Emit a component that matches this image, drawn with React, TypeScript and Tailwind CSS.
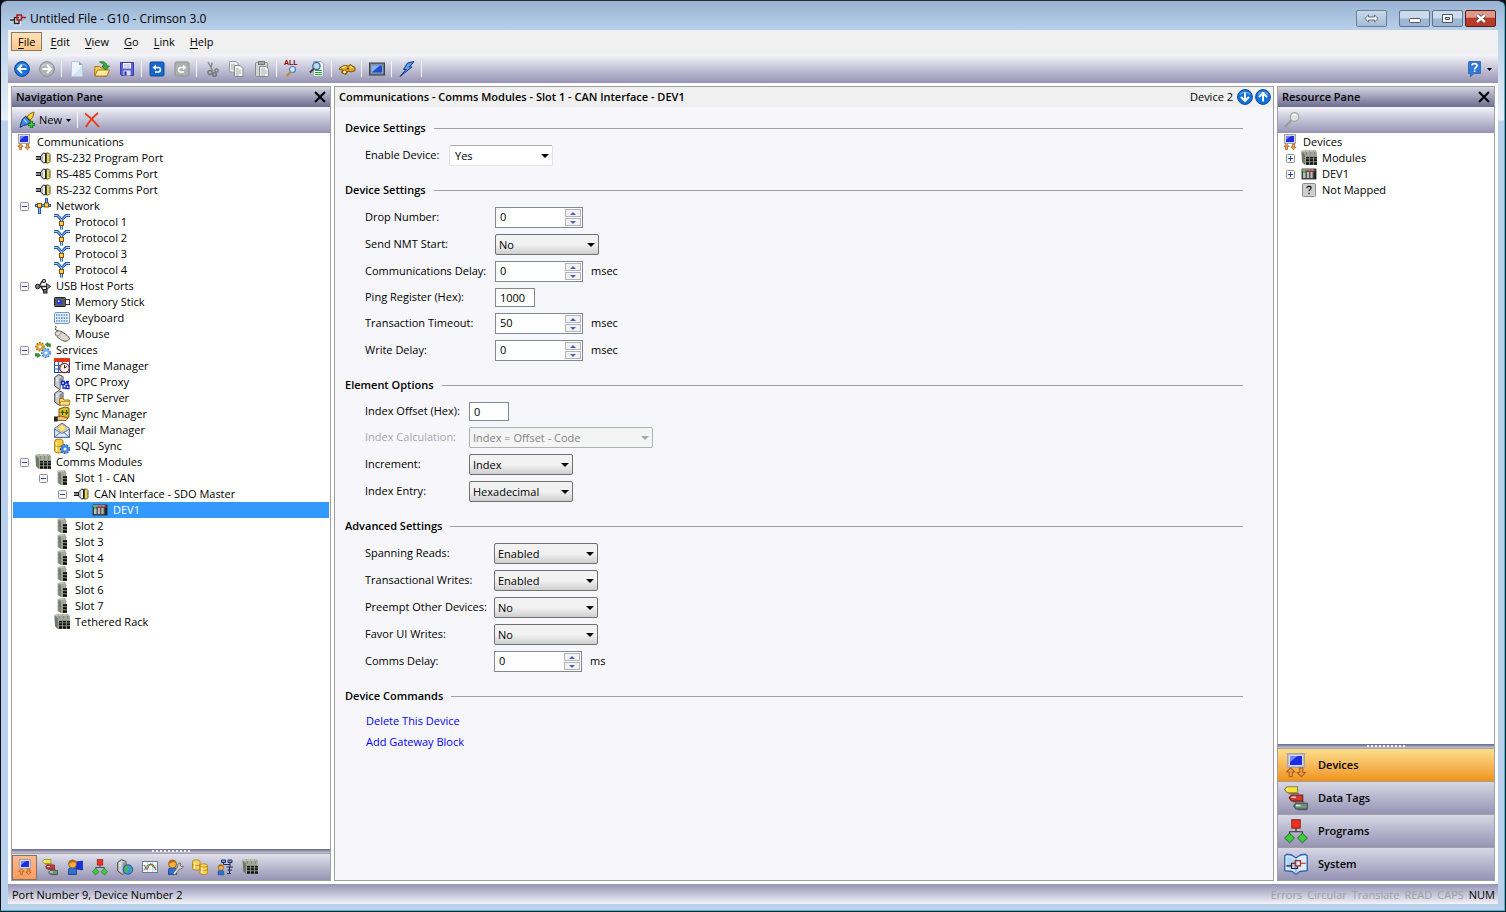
import React, { useState } from 'react';

/* ---------- icons ---------- */

type IconProps = { size?: number };

const Svg: React.FC<{ size?: number; children: React.ReactNode }> = ({ size = 16, children }) => (
  <svg width={size} height={size} viewBox="0 0 16 16" fill="none" className="shrink-0 overflow-visible" aria-hidden="true">
    {children}
  </svg>
);

const CircleArrow: React.FC<{ size?: number; color: string; edge: string; rotate: number }> = ({ size = 16, color, edge, rotate }) => (
  <Svg size={size}>
    <circle cx="8" cy="8" r="7.4" fill={color} stroke={edge} />
    <path d="M3 5.5a6 5 0 0 1 10 0" stroke="#fff" strokeOpacity=".35" strokeWidth="1.5" />
    <path d="M12.5 8H4.5M8 4L4 8l4 4" stroke="#fff" strokeWidth="1.9" transform={`rotate(${rotate} 8 8)`} />
  </Svg>
);

const CommsIcon = ({ size }: IconProps) => (
  <Svg size={size}>
    <rect x="2.5" y=".5" width="11" height="9" fill="#d9d7d2" stroke="#a5a3b0" />
    <rect x="4" y="2" width="8" height="6" fill="#1c2ee0" />
    <path d="M4 2h5L4 6z" fill="#6f86ff" />
    <path d="M4.5 9.8L1.8 12.6h1.7v3h2v-3h1.7zM11.5 15.8l-2.7-2.8h1.7v-3h2v3h1.7z" fill="#f0a050" stroke="#a85a18" strokeWidth=".7" />
  </Svg>
);

const PortIcon = () => (
  <Svg>
    <path d="M1 8h5" stroke="#8a8a8a" strokeWidth="2" />
    <path d="M1 6.5h5M1 9.5h5" stroke="#1a1a1a" />
    <path d="M5.5 6L8.5 3.2h2v9.6h-2L5.5 10z" fill="#b8b8b8" stroke="#222" />
    <path d="M9 4v8" stroke="#fff" strokeWidth="1.4" />
    <path d="M11.5 3h2l1.5 1.5v7L13.5 13h-2z" fill="#f3e02a" stroke="#4a4a4a" />
    <path d="M14.3 5v6" stroke="#8c8c8c" />
  </Svg>
);

const NetworkIcon = () => (
  <Svg>
    <path d="M0 7.5h16M4.5 8v8M11.5 7V0" stroke="#1f57ad" strokeWidth="3" />
    <path d="M1 7.5h14M4.5 8v7.5M11.5 7V.5" stroke="#7db8f5" />
    <rect x="2.5" y="5.5" width="4" height="4" fill="#ffd84a" stroke="#8a4a08" />
    <rect x="9.5" y="5" width="4" height="4" fill="#ffd84a" stroke="#8a4a08" />
  </Svg>
);

const ProtocolIcon = () => (
  <Svg>
    <path d="M0 1.5h3.5L7.5 6v9.5M7.5 6L12 1.5h4" stroke="#1f57ad" strokeWidth="2.8" />
    <path d="M0 1.5h3.5L7.5 6v9.5M7.5 6L12 1.5h4" stroke="#b4d4f7" />
    <rect x="5.5" y="7.5" width="4" height="4" fill="#ffd84a" stroke="#8a4a08" />
  </Svg>
);

const UsbIcon = () => (
  <Svg>
    <path d="M2 8.500h12M4 8.500l3-5h2M6 8.500l3 5h2" stroke="#222" strokeWidth="1.4" />
    <circle cx="2.7" cy="8.5" r="2.3" fill="#777" stroke="#222" />
    <circle cx="9" cy="3" r="1.7" fill="#bbb" stroke="#222" />
    <rect x="8.5" y="11.500" width="3.500" height="3.500" fill="#666" stroke="#222" />
    <path d="M11.500 5.500L15.500 8.500l-4 3z" fill="#999" stroke="#222" />
  </Svg>
);

const MemoryIcon = () => (
  <Svg>
    <rect x=".5" y="3.5" width="11" height="9" rx="1" fill="#5a5a5a" stroke="#1c1c1c" />
    <rect x="11.5" y="5.5" width="4" height="5" fill="#f2f2f2" stroke="#333" />
    <circle cx="5.5" cy="8" r="2.6" fill="#2a3cf0" />
    <circle cx="4.8" cy="7.2" r=".9" fill="#c8d0ff" />
  </Svg>
);

const KeyboardIcon = () => (
  <Svg>
    <rect x=".5" y="2.5" width="15" height="11" rx="1.5" fill="#e4effa" stroke="#8a97a6" />
    <path d="M2 5h12M2 8h12M2 11h12" stroke="#6ea8e4" strokeWidth="1.8" strokeDasharray="1.5 1" />
  </Svg>
);

const MouseIcon = () => (
  <Svg>
    <path d="M1 0c3 1-1 3 1 4s2 0 2 2" stroke="#333" />
    <path d="M1.5 6.5C3 4 6 4.500 9 6.500s6 4 6.500 6c-1 3-5 3.500-8 1.500S0 9 1.500 6.500z" fill="#dcd9d0" stroke="#555" />
    <path d="M3 10c2-.5 4-2 4.500-4" stroke="#888" />
  </Svg>
);

const GearsIcon = () => (
  <Svg>
    <circle cx="5" cy="4.8" r="3.600" stroke="#9a6408" strokeWidth="2.4" strokeDasharray="1.6 1" />
    <circle cx="5" cy="4.8" r="2.600" fill="#fff" stroke="#e0a02c" strokeWidth="2.2" />
    <circle cx="11" cy="11" r="3.700" stroke="#2468b8" strokeWidth="2.4" strokeDasharray="1.6 1" />
    <circle cx="11" cy="11" r="2.700" fill="#fff" stroke="#79b6ee" strokeWidth="2.2" />
    <path d="M10 2.500l3-2v1.300h2.500V5L13 3.800v1z" fill="#2d9a2d" stroke="#176017" strokeWidth=".5" />
    <path d="M5.500 13.500l-3 2v-1.300H.3v-3L3 12v-.7z" fill="#2d9a2d" stroke="#176017" strokeWidth=".5" />
  </Svg>
);

const TimeIcon = () => (
  <Svg>
    <rect x=".5" y=".5" width="15" height="14" fill="#fff" stroke="#1b4aa0" />
    <path d="M0 7.500h16M0 11h16M4.500 4v11M8.500 4v11" stroke="#2a66c8" strokeWidth="1.2" />
    <rect width="16" height="4" fill="#d93a1f" />
    <circle cx="10.5" cy="10" r="4.7" fill="#f6f2ee" stroke="#8a2a1c" strokeWidth="1.3" />
    <path d="M10.500 10V7M10.500 10L13 8.500" stroke="#222" />
  </Svg>
);

const ServerBody = () => (
  <>
    <path d="M.7 3.500L4.500.6 9 2.500v11l-3.500 2L.7 12z" fill="#c9ccd0" stroke="#444" />
    <path d="M5.500 4.500L9 2.500v11l-3.500 2z" fill="#8e9399" />
    <path d="M2 4l2 .8M2 6l2 .8" stroke="#fff" />
  </>
);

const OpcIcon = () => (
  <Svg>
    <ServerBody />
    <path d="M7 7h8v8H7z" fill="#fff" />
    <path d="M7.500 7.500h3v3h-3zM12 11.500h3v3h-3zM10.500 9H14v2.500M9 10.500V14h3M12 7.500h3" stroke="#1224c8" strokeWidth="1.3" />
  </Svg>
);

const FtpIcon = () => (
  <Svg>
    <ServerBody />
    <path d="M5.500 15V8.500H9l1 1.500h5.500v5z" fill="#ffd766" stroke="#a8720c" />
    <path d="M5.500 15L7 11.500h9L15 15z" fill="#ffe694" stroke="#a8720c" strokeWidth=".7" />
  </Svg>
);

const SyncIcon = () => (
  <Svg>
    <path d="M5 12V3l6-2 4 1v9l-4 2z" fill="#e9b324" stroke="#7e5b08" />
    <path d="M8.500 9V6M7 7l1.500-2L10 7M12.500 4v3M11 6l1.500 2L14 6" stroke="#127012" strokeWidth="1.2" />
    <path d="M3 11l4-1 5 1.500 2 .5-2 2.500H3z" fill="#f0c27c" stroke="#6b4210" strokeWidth=".8" />
    <path d="M0 10.500h3.500v5H0z" fill="#222" />
  </Svg>
);

const MailIcon = () => (
  <Svg>
    <path d="M.6 6.500L8 1l7.400 5.500v8.900H.6z" fill="#dfe9f7" stroke="#43619b" />
    <path d="M3 6.500L8 2l5 4.500L8 10z" fill="#ffe37a" stroke="#b9922e" strokeWidth=".6" />
    <path d="M.6 7L8 11.500 15.400 7M.6 15.400L6 10.500M15.400 15.400L10 10.500" stroke="#43619b" strokeWidth=".9" />
  </Svg>
);

const SqlIcon = () => (
  <Svg>
    <path d="M.7 3C.7.5 9 .5 9 3v10c0 2.500-8.300 2.500-8.300 0z" fill="#f7cd3e" stroke="#a8760a" />
    <path d="M2.500 4v9.500" stroke="#fff2b0" strokeWidth="1.5" />
    <path d="M1 7.500c2 1.500 6 1.500 8 0" stroke="#a8760a" strokeWidth=".7" />
    <circle cx="11" cy="11" r="4" stroke="#174f9e" strokeWidth="2" strokeDasharray="1.8 1" />
    <circle cx="11" cy="11" r="2.800" fill="#fff" stroke="#3f8ae4" strokeWidth="2.6" />
  </Svg>
);

const RackIcon = ({ size }: IconProps) => (
  <Svg size={size}>
    <path d="M0 1.500L2 0h12l2 2v13H4l-3-3z" fill="#a4a89a" />
    <path d="M1 2l3 2.500V15l-3-3z" fill="#71756a" />
    <path d="M1 1h13" stroke="#d8dad0" strokeDasharray="3 1" />
    <path d="M5.500 2v3M9.500 2v3M13.500 2v3" stroke="#84887c" />
    <path d="M5 6h10v9H5z" fill="#8d9186" />
    <path d="M5 7h3v1.500H5zM9 7h3v1.500H9zM13 7h3v1.500h-3zM5 9.300h3v2H5zM9 9.300h3v2H9zM13 9.300h3v2h-3zM5 12.300h3v2.400H5zM9 12.300h3v2.400H9zM13 12.300h3v2.400h-3z" fill="#0e110e" />
  </Svg>
);

const SlotIcon = () => (
  <Svg>
    <path d="M3.500 1l3-1h4.500l1.500 3v12H7l-3.500-2z" fill="#a4a89a" />
    <path d="M4.500 2L7 3.500V15l-2.500-2z" fill="#787c71" />
    <path d="M4 1h6" stroke="#d8dad0" />
    <path d="M8.500 6H13v9H8.500z" fill="#8d9186" />
    <path d="M9 6.300h4v2H9zM9 9.300h4v2H9zM9 12.300h4v2.400H9z" fill="#0e110e" />
  </Svg>
);

const DevIcon = () => (
  <Svg>
    <rect x="1" y="3" width="14" height="10" fill="#555" stroke="#222" strokeWidth=".8" />
    <path d="M1 3h12v2H1z" fill="#8c8c8c" />
    <path d="M2 6.500h2.500V12H2zM6 6h2v6H6zM9.500 6h2v6h-2z" fill="#bdbdbd" />
    <path d="M6 4.500h1.500M9 4.500h1.500M12 4.500h1.500" stroke="#f0281e" strokeWidth="1.6" />
    <path d="M2 6h2" stroke="#26d426" strokeWidth="2.2" />
    <path d="M12.800 5.500H15V13h-2.200z" fill="#222" />
  </Svg>
);

const UnknownIcon = () => (
  <Svg>
    <rect x="1.500" y="1.500" width="13" height="13" rx="1" fill="#cfcfcf" stroke="#8a8a8a" />
    <path d="M6 6.200C6 3.500 10 3.800 10 6c0 1.400-2 1.500-2 3.300M8 10.800v1.400" stroke="#222" strokeWidth="1.3" />
  </Svg>
);

const TagsIcon = ({ size }: IconProps) => (
  <Svg size={size}>
    <path d="M3 5h7M6 10.500h7.500M9 15.700h6.500" stroke="#333" strokeOpacity=".6" />
    <path d="M.5 2.300L2 .5h7v4H2z" fill="#f2e43c" stroke="#8c842c" strokeWidth=".7" />
    <path d="M3.500 7.800L5 6h7.500v4H5z" fill="#d6362c" stroke="#6e1c16" strokeWidth=".7" />
    <path d="M6.500 13.300L8 11.500h7.500v3.800H8z" fill="#74907e" stroke="#3c5042" strokeWidth=".7" />
    <path d="M1.800 2.300h1M5 7.500h3M8 13h3" stroke="#fff" strokeOpacity=".8" />
  </Svg>
);

const UserBody = () => (
  <>
    <path d="M1.500 15.500v-4c0-2 1-3 4-3s4 1 4 3v4z" fill="#2f6fd0" stroke="#123a80" strokeWidth=".8" />
    <circle cx="5.500" cy="5" r="4" fill="#f5b04a" stroke="#8a5010" strokeWidth=".8" />
    <path d="M1.500 5C1.500-.5 9-.5 9.500 4L6 3z" fill="#b9680f" />
  </>
);

const UserScreenIcon = () => (
  <Svg>
    <path d="M9 3l6.500-1v9L9 10z" fill="#1430e0" stroke="#0a1a80" strokeWidth=".6" />
    <UserBody />
  </Svg>
);

const ProgramsIcon = ({ size }: IconProps) => (
  <Svg size={size}>
    <path d="M8 6v2.500M3.700 11V8.500h8.600V11" stroke="#2c3c2c" strokeWidth=".8" />
    <rect x="5.200" y=".5" width="5.600" height="5.600" fill="#f2321e" stroke="#7c140a" strokeWidth=".6" />
    <path d="M3.700 9.400L7 12.700 3.700 15.900.4 12.700zM12.300 9.400l3.300 3.300-3.300 3.200L9 12.700z" fill="#3fcb3f" stroke="#146614" strokeWidth=".6" />
  </Svg>
);

const GlobeServerIcon = () => (
  <Svg>
    <ServerBody />
    <circle cx="11" cy="10.500" r="4.800" fill="#3f8fe0" stroke="#1b4a86" strokeWidth=".8" />
    <path d="M8 8c2-2 3 0 4-.5s1 2-1 2.500 1 2-.5 3.500S7 10 8 8zM13.500 9.500l1.500 1-1.500 3z" fill="#4cba48" />
  </Svg>
);

const ChartIcon = () => (
  <Svg>
    <rect x=".5" y="2.500" width="15" height="11" fill="#f7fbff" stroke="#6b7a8c" />
    <path d="M1 6.500h14M1 10h14M5.500 3v10M10.500 3v10" stroke="#c4daf0" />
    <path d="M2 6l3 4.500L8 5l3 .5 3 5.500" stroke="#d23a2a" />
    <path d="M2 11.500L6 6l3-1 2 3 3 1" stroke="#2a9a3a" />
  </Svg>
);

const UserWrenchIcon = () => (
  <Svg>
    <UserBody />
    <path d="M7 15l5-6.500" stroke="#666" strokeWidth="3.2" />
    <path d="M10.500 8a3 3 0 0 1 3-4l-.5 2 1.500 1.500 1.500-.5a3 3 0 0 1-4 3z" fill="#ccc" stroke="#555" strokeWidth=".8" />
    <path d="M7 15l5-6.500" stroke="#ddd" strokeWidth="1.6" />
  </Svg>
);

const DatabaseIcon = () => (
  <Svg>
    <path d="M.6 2.500C.6.300 8 .300 8 2.500v7c0 2-7.400 2-7.400 0z" fill="#fbd65a" stroke="#a8760a" strokeWidth=".8" />
    <path d="M.6 5.500c1.500 1.500 6 1.500 7.400 0" stroke="#a8760a" strokeWidth=".7" />
    <path d="M8 6.500c0-2.200 7.400-2.200 7.400 0V14c0 2-7.400 2-7.400 0z" fill="#fbd65a" stroke="#a8760a" strokeWidth=".8" />
    <path d="M8 7c1.500 1.500 6 1.500 7.400 0M8 10.500c1.500 1.500 6 1.500 7.400 0" stroke="#a8760a" strokeWidth=".7" />
    <path d="M2.500 4v5.500M10 8.500V14" stroke="#fff6c8" strokeWidth="1.2" />
  </Svg>
);

const UserNetIcon = () => (
  <Svg>
    <path d="M4.500 1h4v2.500h-4zM11 1h4v2.500h-4z" fill="#7fa0e0" stroke="#1c2c5c" />
    <path d="M6.500 3.500v2H13M13 3.500V8M9.500 8H16M10.500 11H15M10 14.500h4M12.500 8v6" stroke="#1c2c5c" />
    <g transform="translate(0 5) scale(.7)">
      <UserBody />
    </g>
  </Svg>
);

const SystemIcon = ({ size }: IconProps) => (
  <Svg size={size}>
    <path d="M.5 2.500L2 1.500 5 2l3 2 3-2 3-.5 1.500 1v10l-5 .5L8 15l-2.500-2-5-.5z" fill="#dcebfb" stroke="#2d62b4" strokeWidth=".9" />
    <path d="M2 3l3 .5L8 6v7L5.500 11 2 10.500z" fill="#8fbcee" fillOpacity=".5" />
    <path d="M8 4v10.500" stroke="#7fa9dc" strokeWidth=".8" />
    <path d="M1.500 9.200H5V7.500h3M5 9.200V11h4V9.500" stroke="#222" strokeWidth=".8" />
    <path d="M14.500 7.500H11V5.800H7.500v3.500H11V7.500" stroke="#b02020" strokeWidth=".8" />
  </Svg>
);

const DocIcon = () => (
  <Svg>
    <path d="M2.500.5H10L13.500 4v11.500h-11z" fill="#eef5fd" stroke="#b4c6de" />
    <path d="M10 .5V4h3.500z" fill="#7ba6de" />
    <path d="M3 15L13 5v10z" fill="#c2d8f3" fillOpacity=".6" />
  </Svg>
);

const OpenIcon = () => (
  <Svg>
    <path d="M.8 15V5.500h4.500L7 7h6v8z" fill="#f6cf5a" stroke="#a87a14" />
    <path d="M.8 15l2.700-6h12L13 15z" fill="#ffeb9c" stroke="#a87a14" />
    <path d="M5.500 1c4-1 7 .5 7.500 4h2.500l-4 4L8 5h2c-.5-2-2-3-4.500-4z" fill="#32b132" stroke="#136113" strokeWidth=".7" />
  </Svg>
);

const SaveIcon = () => (
  <Svg>
    <path d="M1.500 1.500h13v13h-12l-1-1z" fill="#5a60dc" stroke="#3a3f9c" />
    <rect x="4" y="2" width="8" height="5.500" fill="#f3f5ff" />
    <path d="M5 4h6M5 6h6" stroke="#9ba0d0" strokeWidth=".8" />
    <rect x="4.500" y="9.500" width="7" height="5" fill="#dfe3f7" />
    <rect x="5.500" y="10.500" width="2" height="4" fill="#23288c" />
  </Svg>
);

const UndoIcon: React.FC<{ color: string; edge: string; flip?: boolean }> = ({ color, edge, flip }) => (
  <Svg>
    <rect x="1" y="1" width="14" height="14" rx="1.500" fill={color} stroke={edge} />
    <g transform={flip ? 'translate(16 0) scale(-1 1)' : undefined}>
      <path d="M5.500 6.500h4c2.500 0 2.500 4.500 0 4.500H6" stroke="#fff" strokeWidth="1.6" />
      <path d="M3.500 6.500l3.500-3v6z" fill="#fff" />
    </g>
  </Svg>
);

const CutIcon = () => (
  <Svg>
    <path d="M4 1l5 9M8 1.500L7 8" stroke="#8c8c8c" strokeWidth="1.5" />
    <circle cx="6" cy="11.500" r="2" stroke="#777" strokeWidth="1.5" />
    <circle cx="10.500" cy="13.500" r="1.800" stroke="#777" strokeWidth="1.500" />
    <circle cx="12.500" cy="9.500" r="1.600" stroke="#777" strokeWidth="1.300" />
  </Svg>
);

const CopyIcon = () => (
  <Svg>
    <path d="M.5.5H7l2 2V11H.5z" fill="#eee" stroke="#999" />
    <path d="M2 4h4M2 6h3M2 8h3" stroke="#aaa" />
    <path d="M5.500 4.500H11l3 3v8H5.500z" fill="#f4f4f4" stroke="#888" />
    <path d="M7 8h3M7 10h5M7 12h5M7 14h3" stroke="#aaa" />
  </Svg>
);

const PasteIcon = () => (
  <Svg>
    <rect x="1.500" y="1.500" width="12" height="14" rx="1" fill="#d4d4d4" stroke="#888" />
    <rect x="4.500" y=".5" width="6" height="3" fill="#aaa" stroke="#777" />
    <path d="M5.500 5.500H12L14.500 8v7.500h-9z" fill="#f4f4f4" stroke="#888" />
    <path d="M7 8h4M7 10h6M7 12h6M7 14h4" stroke="#aaa" />
  </Svg>
);

const FindAllIcon = () => (
  <Svg>
    <text x="0" y="4" fontSize="7" fontWeight="700" fill="#8c0000" fontFamily="Liberation Sans, sans-serif">ALL</text>
    <circle cx="8.500" cy="8.500" r="3" fill="#cfe8fb" stroke="#4686c0" strokeWidth="1.2" />
    <path d="M6.500 11l-4 4" stroke="#c98724" strokeWidth="2" />
  </Svg>
);

const FindDocIcon = () => (
  <Svg>
    <path d="M4.500.5H12L14.500 3v12.500h-10z" fill="#f7fbf7" stroke="#9aa7b6" />
    <path d="M6 9.500h7M6 11.500h7M6 13.500h7" stroke="#27a03a" />
    <circle cx="7.500" cy="5" r="3.600" fill="#bcdcf5" stroke="#39689c" strokeWidth="1.3" />
    <path d="M5 7.500L1 11.500" stroke="#444" strokeWidth="2" />
  </Svg>
);

const BinocularsIcon = () => (
  <Svg>
    <path d="M.5 7L5 4.500l5 .5 1-1.500 5 3v3L12 11l-3-1-2 3.500-4.500-2L3.500 9l-3-.5z" fill="#e2a71c" stroke="#7a5206" />
    <circle cx="5.500" cy="11" r="2" fill="#fff0a8" stroke="#7a5206" />
    <path d="M3 6.500l4-1M11 5.500l3 1.500" stroke="#fff0a8" strokeWidth="1.2" />
    <circle cx="9" cy="7.500" r="1" fill="#4a3204" />
  </Svg>
);

const MonitorIcon = () => (
  <Svg>
    <rect x=".5" y="2" width="15" height="12" fill="#6b7580" stroke="#38404a" />
    <rect x="2.500" y="4" width="11" height="8" fill="#1c4ed2" stroke="#c4ccd6" strokeWidth=".6" />
    <path d="M3 4.500h8L3 11z" fill="#a8caf8" fillOpacity=".8" />
  </Svg>
);

const LightningIcon = () => (
  <Svg>
    <path d="M8.500 2l6.500-1.500L10.500 6h2.500L1 15.500l6-7H4.500z" fill="#5b9cf0" stroke="#12357e" />
  </Svg>
);

const HelpIcon = () => (
  <Svg>
    <path d="M2 .5h11.500v12H7l-3.500 3.300V12.500h-2V1z" fill="#2f7ad6" stroke="#2a5fa8" strokeWidth=".8" />
    <path d="M5 4.500C5 1.800 10 2 10 4.700c0 1.800-2.400 1.700-2.400 3.800M7.600 9.500v1.600" stroke="#fff" strokeWidth="1.7" />
  </Svg>
);

const PlugIcon = () => (
  <Svg>
    <path d="M8 5l3-3.500 2-.5 2-1-.5 3-1 2.500L11 8z" fill="#ffd53c" stroke="#8c6206" />
    <path d="M6.500 4L12 9" stroke="#8c6206" strokeWidth="1.5" />
    <path d="M3.500 7l3-2.500 5 5-3 3-4 1-3.500 2L2 11z" fill="#3f86e0" stroke="#143c80" />
    <path d="M5 7.500l3 3" stroke="#b4d6ff" strokeWidth="1.3" />
    <path d="M12.500 9v7M9 12.500h7" stroke="#0e660e" strokeWidth="3" />
    <path d="M12.500 9.600v5.800M9.600 12.500h5.800" stroke="#46d046" strokeWidth="1.6" />
  </Svg>
);

const DeleteIcon = () => (
  <Svg>
    <path d="M1 1.500C6 5 11 10 15 15M14 1C9 5 5 9.500 2 15" stroke="#e83a0e" strokeWidth="1.7" />
  </Svg>
);

const MagnifierIcon = () => (
  <Svg>
    <circle cx="10.500" cy="5" r="4.300" fill="#e2e2e2" stroke="#a4a4a4" strokeWidth="1.2" />
    <path d="M8 3.500c1-1.500 3-1.500 4-.5" stroke="#fff" strokeWidth="1.3" />
    <path d="M7 8.500L1 15" stroke="#999" strokeWidth="2" />
  </Svg>
);

const AppIcon = () => (
  <Svg>
    <path d="M0 9h5V6.500h4M5 9v4h4.500v-3" stroke="#fff" strokeOpacity=".6" strokeWidth="3" />
    <path d="M0 9h4.500V6.500H9M4.500 9v3.500H9V9" stroke="#222" strokeWidth="1.4" />
    <path d="M16 6.500h-4.500V4H7v5h4.500V6.500" stroke="#b01818" strokeWidth="1.4" />
  </Svg>
);

const CloseGlyph = () => (
  <svg width="12" height="12" viewBox="0 0 12 12" aria-hidden="true">
    <path d="M1 1l10 10M11 1L1 11" stroke="#000" strokeWidth="2" />
  </svg>
);

const Caret: React.FC<{ className?: string }> = ({ className = '' }) => (
  <svg width="8" height="4" viewBox="0 0 8 4" className={className} aria-hidden="true">
    <path d="M0 0h8L4 4z" fill="currentColor" />
  </svg>
);

const SmallCaret = () => (
  <svg width="5" height="3" viewBox="0 0 5 3" aria-hidden="true">
    <path d="M0 0h5L2.500 3z" fill="#000" />
  </svg>
);

/* ---------- data ---------- */

type Node = { label: string; depth: number; icon: React.FC<any>; box?: '+' | '-' };

const NAV_TREE: Node[] = [
  { label: 'Communications', depth: 0, icon: CommsIcon },
  { label: 'RS-232 Program Port', depth: 1, icon: PortIcon },
  { label: 'RS-485 Comms Port', depth: 1, icon: PortIcon },
  { label: 'RS-232 Comms Port', depth: 1, icon: PortIcon },
  { label: 'Network', depth: 1, icon: NetworkIcon, box: '-' },
  { label: 'Protocol 1', depth: 2, icon: ProtocolIcon },
  { label: 'Protocol 2', depth: 2, icon: ProtocolIcon },
  { label: 'Protocol 3', depth: 2, icon: ProtocolIcon },
  { label: 'Protocol 4', depth: 2, icon: ProtocolIcon },
  { label: 'USB Host Ports', depth: 1, icon: UsbIcon, box: '-' },
  { label: 'Memory Stick', depth: 2, icon: MemoryIcon },
  { label: 'Keyboard', depth: 2, icon: KeyboardIcon },
  { label: 'Mouse', depth: 2, icon: MouseIcon },
  { label: 'Services', depth: 1, icon: GearsIcon, box: '-' },
  { label: 'Time Manager', depth: 2, icon: TimeIcon },
  { label: 'OPC Proxy', depth: 2, icon: OpcIcon },
  { label: 'FTP Server', depth: 2, icon: FtpIcon },
  { label: 'Sync Manager', depth: 2, icon: SyncIcon },
  { label: 'Mail Manager', depth: 2, icon: MailIcon },
  { label: 'SQL Sync', depth: 2, icon: SqlIcon },
  { label: 'Comms Modules', depth: 1, icon: RackIcon, box: '-' },
  { label: 'Slot 1 - CAN', depth: 2, icon: SlotIcon, box: '-' },
  { label: 'CAN Interface - SDO Master', depth: 3, icon: PortIcon, box: '-' },
  { label: 'DEV1', depth: 4, icon: DevIcon },
  { label: 'Slot 2', depth: 2, icon: SlotIcon },
  { label: 'Slot 3', depth: 2, icon: SlotIcon },
  { label: 'Slot 4', depth: 2, icon: SlotIcon },
  { label: 'Slot 5', depth: 2, icon: SlotIcon },
  { label: 'Slot 6', depth: 2, icon: SlotIcon },
  { label: 'Slot 7', depth: 2, icon: SlotIcon },
  { label: 'Tethered Rack', depth: 2, icon: RackIcon },
];

const RESOURCE_TREE: Node[] = [
  { label: 'Devices', depth: 0, icon: CommsIcon },
  { label: 'Modules', depth: 1, icon: RackIcon, box: '+' },
  { label: 'DEV1', depth: 1, icon: DevIcon, box: '+' },
  { label: 'Not Mapped', depth: 1, icon: UnknownIcon },
];

const MENUS = ['File', 'Edit', 'View', 'Go', 'Link', 'Help'];

const TOOLS: ({ name: string; icon: React.ReactNode } | null)[] = [
  { name: 'Back', icon: <CircleArrow color="#1672d8" edge="#0b4796" rotate={0} /> },
  { name: 'Forward', icon: <CircleArrow color="#b4b4b4" edge="#8f8f8f" rotate={180} /> },
  null,
  { name: 'New', icon: <DocIcon /> },
  { name: 'Open', icon: <OpenIcon /> },
  { name: 'Save', icon: <SaveIcon /> },
  null,
  { name: 'Undo', icon: <UndoIcon color="#1668d0" edge="#0d4796" /> },
  { name: 'Redo', icon: <UndoIcon color="#b0b0b0" edge="#8e8e8e" flip /> },
  null,
  { name: 'Cut', icon: <CutIcon /> },
  { name: 'Copy', icon: <CopyIcon /> },
  { name: 'Paste', icon: <PasteIcon /> },
  null,
  { name: 'Find all', icon: <FindAllIcon /> },
  { name: 'Find in document', icon: <FindDocIcon /> },
  null,
  { name: 'Search', icon: <BinocularsIcon /> },
  null,
  { name: 'Emulator', icon: <MonitorIcon /> },
  null,
  { name: 'Download', icon: <LightningIcon /> },
  null,
];

const CATEGORIES: { name: string; icon: React.FC<any> }[] = [
  { name: 'Communications', icon: CommsIcon },
  { name: 'Data Tags', icon: TagsIcon },
  { name: 'Display Pages', icon: UserScreenIcon },
  { name: 'Programs', icon: ProgramsIcon },
  { name: 'Web Server', icon: GlobeServerIcon },
  { name: 'Data Logger', icon: ChartIcon },
  { name: 'Security', icon: UserWrenchIcon },
  { name: 'Recipes', icon: DatabaseIcon },
  { name: 'Control', icon: UserNetIcon },
  { name: 'Modules', icon: RackIcon },
];

const RESOURCES: { name: string; icon: React.FC<any> }[] = [
  { name: 'Devices', icon: CommsIcon },
  { name: 'Data Tags', icon: TagsIcon },
  { name: 'Programs', icon: ProgramsIcon },
  { name: 'System', icon: SystemIcon },
];

/* ---------- building blocks ---------- */

const Tree: React.FC<{ nodes: Node[]; label: string; initial?: string }> = ({ nodes, label, initial }) => {
  const [selected, setSelected] = useState(nodes.findIndex((n) => n.label === initial));

  return (
    <ul aria-label={label} className="min-h-0 flex-1 overflow-hidden bg-white px-px pt-px">
      {nodes.map((node, i) => {
        const Icon = node.icon;
        return (
          <li
            key={i}
            onClick={() => setSelected(i)}
            className={`flex h-4 items-center pl-[3px] ${i === selected ? 'bg-[#3399ff] text-white' : ''}`}
          >
            {Array.from({ length: node.depth }, (_, d) => (
              <span key={d} className="flex w-[19px] shrink-0 pl-1">
                {node.box && d === node.depth - 1 && (
                  <svg width="9" height="9" viewBox="0 0 9 9" aria-hidden="true">
                    <rect x=".5" y=".5" width="8" height="8" rx="1" fill="#f6f6f6" stroke="#919191" />
                    <path d={node.box === '+' ? 'M2 4.500h5M4.500 2v5' : 'M2 4.500h5'} stroke="#2b4aa8" />
                  </svg>
                )}
              </span>
            ))}
            <Icon />
            <span className="pl-[5px] whitespace-nowrap">{node.label}</span>
          </li>
        );
      })}
    </ul>
  );
};

const PaneHeader: React.FC<{ title: string }> = ({ title }) => (
  <div className="flex h-5 shrink-0 items-center justify-between bg-linear-to-b from-[#d5d4e3] to-[#6e6c8e] px-1">
    <h2 className="font-semibold">{title}</h2>
    <button type="button" aria-label={`Close ${title}`}>
      <CloseGlyph />
    </button>
  </div>
);

const Grip = () => (
  <div className="flex h-[5px] shrink-0 items-center justify-center gap-[2px] border-b border-[#a3a3a3] bg-linear-to-b from-[#66648a] to-[#c9c8da]">
    {Array.from({ length: 10 }, (_, i) => (
      <span key={i} className="size-[2px] bg-[#f0f0f6]" />
    ))}
  </div>
);

const Section: React.FC<{ title: string; children: React.ReactNode }> = ({ title, children }) => (
  <section>
    <div className="mb-[9px] flex h-4 items-center gap-2">
      <h3 className="font-semibold whitespace-nowrap">{title}</h3>
      <div className="h-px flex-1 bg-[#a0a0a0]" />
    </div>
    {children}
  </section>
);

const Rows: React.FC<{ cols: string; children: React.ReactNode }> = ({ cols, children }) => (
  <div className={`grid items-center gap-y-[6px] pl-5 ${cols}`}>{children}</div>
);

type FieldProps = { id: string; label: string; value: string; disabled?: boolean };

const FieldLabel: React.FC<{ id: string; label: string; disabled?: boolean }> = ({ id, label, disabled }) => (
  <label htmlFor={id} className={`pb-[2px] whitespace-nowrap ${disabled ? 'text-[#a6a6a6]' : ''}`}>
    {label}
  </label>
);

const SelectField: React.FC<FieldProps & { options: string[]; width?: string; flat?: boolean }> = ({
  id, label, value, options, disabled, width = 'w-[104px]', flat,
}) => (
  <>
    <FieldLabel id={id} label={label} disabled={disabled} />
    <div className={`relative flex h-[21px] items-center ${width}`}>
      <select
        id={id}
        defaultValue={value}
        disabled={disabled}
        className={`h-full w-full appearance-none rounded-[2px] border pr-5 ${
          flat
            ? 'border-[#e2e3ea] border-t-[#abadb3] bg-white pl-[5px]'
            : disabled
              ? 'border-[#adb2b5] bg-[#f4f4f4] pl-[3px] text-[#838383] opacity-100'
              : 'border-[#707070] bg-linear-to-b from-[#f2f2f2] from-50% to-[#cfcfcf] to-100% pl-[3px]'
        }`}
      >
        {options.map((o) => (
          <option key={o}>{o}</option>
        ))}
      </select>
      <Caret className={`pointer-events-none absolute right-1 ${disabled ? 'text-[#a8a8a8]' : ''}`} />
    </div>
  </>
);

const SpinField: React.FC<FieldProps & { unit?: string }> = ({ id, label, value, unit }) => {
  const [n, setN] = useState(Number(value));
  return (
    <>
      <FieldLabel id={id} label={label} />
      <div className="flex items-center gap-2">
        <div className="flex h-[21px] w-[88px] border border-[#828790] bg-white p-px">
          <input
            id={id}
            inputMode="numeric"
            value={n}
            onChange={(e) => setN(Number(e.target.value) || 0)}
            className="h-[15px] w-0 flex-1 pl-[3px] outline-none"
          />
          <div className="flex w-4 flex-col gap-px">
            <button type="button" aria-label={`Increase ${label}`} onClick={() => setN(n + 1)} className="flex flex-1 items-center justify-center border border-[#b4b4b8] bg-[#f2f2f2]">
              <svg width="6" height="3" viewBox="0 0 6 3"><path d="M0 3h6L3 0z" fill="#4a5fb4" /></svg>
            </button>
            <button type="button" aria-label={`Decrease ${label}`} onClick={() => setN(Math.max(0, n - 1))} className="flex flex-1 items-center justify-center border border-[#b4b4b8] bg-[#f2f2f2]">
              <svg width="6" height="3" viewBox="0 0 6 3"><path d="M0 0h6L3 3z" fill="#4a5fb4" /></svg>
            </button>
          </div>
        </div>
        {unit && <span className="pb-[2px]">{unit}</span>}
      </div>
    </>
  );
};

const TextField: React.FC<FieldProps> = ({ id, label, value }) => (
  <>
    <FieldLabel id={id} label={label} />
    <input id={id} type="text" defaultValue={value} className="h-[19px] w-10 border border-[#828790] bg-white px-1 pb-px outline-none" />
  </>
);

/* ---------- window ---------- */

const TitleBar = () => (
  <header className="flex h-[29px] shrink-0 items-center px-[2px] pt-[6px]">
    <AppIcon />
    <h1 className="flex-1 pl-1 text-[12px]">Untitled File - G10 - Crimson 3.0</h1>
    <div className="flex items-center gap-[2px]">
      <button type="button" aria-label="Resize" className="mr-[10px] flex h-[17px] w-[31px] items-center justify-center rounded-[2px] border border-[#6b7f97] bg-linear-to-b from-[#c8d9eb] to-[#a5bdd8]">
        <svg width="15" height="9" viewBox="0 0 15 9"><path d="M.8 4.500L4.500 1v2h6V1l3.700 3.500L10.500 8V6h-6v2z" fill="#f4f6fa" stroke="#54617a" strokeWidth=".9" /></svg>
      </button>
      <button type="button" aria-label="Minimize" className="flex h-[17px] w-[31px] items-end justify-center rounded-[2px] border border-[#5e7390] bg-linear-to-b from-[#cbdbec] from-45% to-[#9db7d4] to-55% pb-[3px]">
        <svg width="12" height="5" viewBox="0 0 12 5"><rect x=".5" y=".5" width="11" height="4" rx="1" fill="#fff" stroke="#4b5468" /></svg>
      </button>
      <button type="button" aria-label="Maximize" className="flex h-[17px] w-[31px] items-center justify-center rounded-[2px] border border-[#5e7390] bg-linear-to-b from-[#cbdbec] from-45% to-[#9db7d4] to-55%">
        <svg width="11" height="9" viewBox="0 0 11 9"><path d="M.5.5h10v8H.5zM3.500 3.500v2h4v-2z" fill="#fff" fillRule="evenodd" stroke="#4b5468" /></svg>
      </button>
      <button type="button" aria-label="Close" className="flex h-[17px] w-[31px] items-center justify-center rounded-[2px] border border-[#5a1a1a] bg-linear-to-b from-[#dd9a8c] from-40% to-[#b93a28] to-50%">
        <svg width="12" height="9" viewBox="0 0 12 9"><path d="M2 1l8 7M10 1L2 8" stroke="#4b3038" strokeWidth="3.8" /><path d="M2 1l8 7M10 1L2 8" stroke="#fff" strokeWidth="2.4" /></svg>
      </button>
    </div>
  </header>
);

const MenuBar = () => (
  <nav className="flex h-[25px] shrink-0 items-center gap-px bg-[#f0f0f0] pb-[2px] pl-[3px]">
    {MENUS.map((m, i) => (
      <button
        key={m}
        type="button"
        className={`flex h-[19px] items-center border px-[6px] ${i === 0 ? 'border-[#8a7a66] bg-linear-to-b from-[#ffe0b8] to-[#ffc78a]' : 'border-transparent'}`}
      >
        <span className="underline underline-offset-2">{m[0]}</span>
        {m.slice(1)}
      </button>
    ))}
  </nav>
);

const ToolBar = () => (
  <div className="flex h-7 shrink-0 items-center bg-linear-to-b from-[#f3f3f9] to-[#9694b4] pr-[6px] pl-px">
    {TOOLS.map((t, i) =>
      t ? (
        <button key={i} type="button" aria-label={t.name} className="flex w-[25px] justify-center">
          {t.icon}
        </button>
      ) : (
        <span key={i} className="flex w-[5px] justify-center">
          <span className="h-4 w-px bg-[#f6f6f6]" />
        </span>
      ),
    )}
    <button type="button" aria-label="Help" className="ml-auto flex items-center gap-1">
      <HelpIcon />
      <SmallCaret />
    </button>
  </div>
);

const NavigationPane = () => {
  const [active, setActive] = useState(0);
  return (
    <aside className="flex w-80 shrink-0 flex-col border border-[#a0a0a0]">
      <PaneHeader title="Navigation Pane" />
      <div className="flex h-[26px] shrink-0 items-center bg-linear-to-b from-[#f3f3f9] to-[#9694b4] pl-[7px]">
        <button type="button" className="flex items-center gap-1">
          <PlugIcon />
          <span>New</span>
          <SmallCaret />
        </button>
        <span className="mx-[6px] h-4 w-px bg-[#f6f6f6]" />
        <button type="button" aria-label="Delete">
          <DeleteIcon />
        </button>
      </div>
      <Tree nodes={NAV_TREE} label="Navigation" initial="DEV1" />
      <Grip />
      <div className="flex h-[26px] shrink-0 items-center bg-linear-to-b from-[#e2e1ec] to-[#9694b4]">
        {CATEGORIES.map(({ name, icon: Icon }, i) => (
          <button
            key={name}
            type="button"
            aria-label={name}
            onClick={() => setActive(i)}
            className={`flex h-[25px] w-[25px] items-center justify-center border ${
              i === active ? 'border-[#7c7468] bg-linear-to-b from-[#ffb98c] to-[#ff9a5c]' : 'border-transparent'
            }`}
          >
            <Icon />
          </button>
        ))}
      </div>
    </aside>
  );
};

const ResourcePane = () => {
  const [active, setActive] = useState(0);
  return (
    <aside className="flex w-[218px] shrink-0 flex-col border border-[#a0a0a0]">
      <PaneHeader title="Resource Pane" />
      <div className="flex h-[26px] shrink-0 items-center bg-linear-to-b from-[#f3f3f9] to-[#9694b4] pl-[6px]">
        <button type="button" aria-label="Find">
          <MagnifierIcon />
        </button>
      </div>
      <Tree nodes={RESOURCE_TREE} label="Resources" />
      <Grip />
      <div className="flex shrink-0 flex-col gap-px bg-[#a0a0a0]">
        {RESOURCES.map(({ name, icon: Icon }, i) => (
          <button
            key={name}
            type="button"
            onClick={() => setActive(i)}
            className={`flex h-8 items-center gap-[10px] bg-linear-to-b pl-[6px] font-semibold ${
              i === active ? 'from-[#fbdf8b] to-[#f0930f]' : 'from-[#d8d7e5] to-[#9694b4]'
            }`}
          >
            <Icon size={24} />
            {name}
          </button>
        ))}
      </div>
    </aside>
  );
};

const DeviceEditor = () => (
  <main className="flex min-w-0 flex-1 flex-col border border-[#a0a0a0] bg-[#f7f7fb]">
    <div className="flex h-5 shrink-0 items-center gap-[2px] bg-[#f0f0f0] pr-[2px] pl-1">
      <h2 className="flex-1 truncate font-semibold">Communications - Comms Modules - Slot 1 - CAN Interface - DEV1</h2>
      <span className="pr-[2px]">Device 2</span>
      <button type="button" aria-label="Next device">
        <CircleArrow color="#1672d8" edge="#0b4796" rotate={270} />
      </button>
      <button type="button" aria-label="Previous device">
        <CircleArrow color="#1672d8" edge="#0b4796" rotate={90} />
      </button>
    </div>

    <form className="flex flex-col gap-4 pt-[13px] pr-[30px] pl-[10px]">
      <Section title="Device Settings">
        <Rows cols="grid-cols-[84px_1fr]">
          <SelectField id="enable" label="Enable Device:" value="Yes" options={['Yes', 'No']} flat />
        </Rows>
      </Section>

      <Section title="Device Settings">
        <Rows cols="grid-cols-[130px_1fr]">
          <SpinField id="drop" label="Drop Number:" value="0" />
          <SelectField id="nmt" label="Send NMT Start:" value="No" options={['No', 'Yes']} />
          <SpinField id="comms-delay" label="Communications Delay:" value="0" unit="msec" />
          <TextField id="ping" label="Ping Register (Hex):" value="1000" />
          <SpinField id="timeout" label="Transaction Timeout:" value="50" unit="msec" />
          <SpinField id="write-delay" label="Write Delay:" value="0" unit="msec" />
        </Rows>
      </Section>

      <Section title="Element Options">
        <Rows cols="grid-cols-[104px_1fr]">
          <TextField id="offset" label="Index Offset (Hex):" value="0" />
          <SelectField id="calc" label="Index Calculation:" value="Index = Offset - Code" options={['Index = Offset - Code']} width="w-[184px]" disabled />
          <SelectField id="increment" label="Increment:" value="Index" options={['Index', 'Subindex']} />
          <SelectField id="entry" label="Index Entry:" value="Hexadecimal" options={['Hexadecimal', 'Decimal']} />
        </Rows>
      </Section>

      <Section title="Advanced Settings">
        <Rows cols="grid-cols-[129px_1fr]">
          <SelectField id="spanning" label="Spanning Reads:" value="Enabled" options={['Enabled', 'Disabled']} />
          <SelectField id="transactional" label="Transactional Writes:" value="Enabled" options={['Enabled', 'Disabled']} />
          <SelectField id="preempt" label="Preempt Other Devices:" value="No" options={['No', 'Yes']} />
          <SelectField id="favor" label="Favor UI Writes:" value="No" options={['No', 'Yes']} />
          <SpinField id="delay" label="Comms Delay:" value="0" unit="ms" />
        </Rows>
      </Section>

      <Section title="Device Commands">
        <div className="flex flex-col items-start gap-[5px] pl-[21px] text-[#0000ff]">
          <a href="#delete">Delete This Device</a>
          <a href="#gateway">Add Gateway Block</a>
        </div>
      </Section>
    </form>
  </main>
);

const StatusBar = () => (
  <footer className="flex h-5 shrink-0 items-center gap-[5px] bg-linear-to-b from-[#9694b4] to-[#f3f3f9] pt-[2px] pr-[3px] pl-1">
    <span className="flex-1">Port Number 9, Device Number 2</span>
    {['Errors', 'Circular', 'Translate', 'READ', 'CAPS'].map((s) => (
      <span key={s} className="text-[#a0a0a4]">{s}</span>
    ))}
    <span>NUM</span>
  </footer>
);

const App: React.FC = () => (
  <div className="h-screen bg-[#101018] pr-px pb-px font-['Open_Sans','Noto_Sans',sans-serif] text-[11px] leading-4 text-black">
    <div className="flex h-full flex-col rounded-t-[7px] border border-t-[#2a2a30] border-r-[#22c6e6] border-b-[#22c6e6] border-l-[#101018] bg-[linear-gradient(to_bottom,#98b3d2_0,#b9d1ea_30px,#e6eef8_119px,#b9d1ea_120px)] pr-[6px] pb-[6px] pl-[7px]">
      <TitleBar />
      <MenuBar />
      <ToolBar />
      <div className="flex min-h-0 flex-1 gap-[3px] bg-white p-[3px]">
        <NavigationPane />
        <DeviceEditor />
        <ResourcePane />
      </div>
      <StatusBar />
    </div>
  </div>
);

export default App;
